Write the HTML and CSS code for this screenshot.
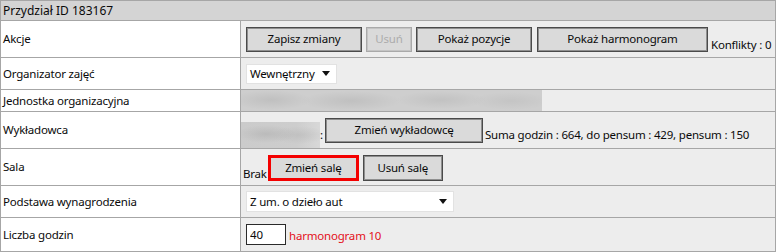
FILE: index.html
```html
<!DOCTYPE html>
<html lang="pl">
<head>
<meta charset="utf-8">
<title>Przydział ID 183167</title>
<link rel="stylesheet" href="styles.css">
</head>
<body>
<div class="panel">
  <div class="head">Przydział ID 183167</div>

  <div class="row r-akcje">
    <div class="label">Akcje</div>
    <div class="value bottom">
      <button class="btn w-save">Zapisz zmiany</button>
      <button class="btn w-del" disabled>Usuń</button>
      <button class="btn w-pos">Pokaż pozycje</button>
      <button class="btn w-harm">Pokaż harmonogram</button>
      <span class="note">Konflikty : 0</span>
    </div>
  </div>

  <div class="row r-org">
    <div class="label">Organizator zajęć</div>
    <div class="value">
      <div class="select w-org"><span>Wewnętrzny</span><svg class="arrow" width="8" height="5" viewBox="0 0 8 5"><path d="M0 0H8L4 5Z" fill="#111"/></svg></div>
    </div>
  </div>

  <div class="row r-unit">
    <div class="label">Jednostka organizacyjna</div>
    <div class="value flush">
      <div class="blur blur-unit"></div>
    </div>
  </div>

  <div class="row r-lect">
    <div class="label">Wykładowca</div>
    <div class="value flush lect">
      <div class="blur blur-name"></div>
      <span class="colon">:</span>
      <button class="btn w-lect">Zmień wykładowcę</button>
      <span class="note">Suma godzin : 664, do pensum : 429, pensum : 150</span>
    </div>
  </div>

  <div class="row r-room">
    <div class="label">Sala</div>
    <div class="value room">
      <span class="brak">Brak</span>
      <button class="btn btn-hl w-room">Zmień salę</button>
      <button class="btn w-droom">Usuń salę</button>
    </div>
  </div>

  <div class="row r-pay">
    <div class="label">Podstawa wynagrodzenia</div>
    <div class="value">
      <div class="select w-pay"><span>Z um. o dzieło aut</span><svg class="arrow" width="8" height="5" viewBox="0 0 8 5"><path d="M0 0H8L4 5Z" fill="#111"/></svg></div>
    </div>
  </div>

  <div class="row r-hours">
    <div class="label">Liczba godzin</div>
    <div class="value">
      <input class="num" type="text" value="40">
      <span class="red">harmonogram 10</span>
    </div>
  </div>
</div>
</body>
</html>
```

FILE: styles.css
```css
* { box-sizing: border-box; }
html, body { margin: 0; padding: 0; background: #fff; }
body {
  font-family: "Noto Sans", "Open Sans", sans-serif;
  font-size: 11.5px;
  letter-spacing: -0.2px;
  color: #0a0a0a;
}
.panel {
  width: 776px;
  border: 1px solid #a6a6a6;
}
.head {
  height: 19px;
  line-height: 19px;
  padding-left: 2px;
  background: #d4d4d4;
  font-size: 12px;
  letter-spacing: 0;
}
.row {
  display: grid;
  grid-template-columns: 240px 1fr;
  border-top: 1px solid #a6a6a6;
}
.r-akcje, .r-lect, .r-room { height: 37px; }
.r-org, .r-pay { height: 32px; }
.r-unit { height: 22px; }
.r-hours { height: 34px; }

.label {
  background: #fff;
  border-right: 1px solid #a6a6a6;
  padding-left: 2px;
  display: flex;
  align-items: center;
  padding-bottom: 1px;
}
.value {
  background: #ededed;
  padding-left: 5px;
  display: flex;
  align-items: center;
  white-space: nowrap;
}
.value.bottom { align-items: flex-end; padding-bottom: 5px; }
.value.flush { padding-left: 0; }

.btn {
  font: inherit;
  letter-spacing: inherit;
  color: #0a0a0a;
  height: 25px;
  padding: 0 0 2px;
  margin: 0 4px 0 0;
  background: #dadada;
  border: 1px solid #4a4a4a;
  box-shadow: inset 0 0 0 1px #8f8f8f;
  border-radius: 0;
  white-space: nowrap;
}
.btn:disabled {
  color: #acacac;
  border-color: #a9a9a9;
  box-shadow: inset 0 0 0 1px #c4c4c4;
}
.btn-hl {
  border: 3px solid #f40000;
  box-shadow: none;
}
.w-save { width: 116px; }
.w-del { width: 46px; }
.w-pos { width: 116px; margin-right: 5px; }
.w-harm { width: 171px; margin-right: 3px; }
.w-lect { width: 158px; margin-right: 2px; }
.w-room { width: 91px; height: 26px; }
.w-droom { width: 80px; height: 26px; }

.note { line-height: 14px; }

.select {
  height: 20px;
  background: #fff;
  border: 1px solid #e2e2e2;
  display: flex;
  align-items: center;
  justify-content: space-between;
  padding: 0 6px 0 3px;
}
.w-org { width: 91px; }
.w-pay { width: 208px; height: 21px; }
.select span { padding-bottom: 1px; }
.arrow { display: block; }

.blur-unit {
  width: 301px;
  height: 21px;
  background:
    radial-gradient(ellipse 40px 10px at 30px 10px, rgba(180,180,180,0.55), transparent),
    radial-gradient(ellipse 50px 10px at 110px 11px, rgba(178,178,178,0.5), transparent),
    radial-gradient(ellipse 45px 9px at 200px 10px, rgba(182,182,182,0.5), transparent),
    radial-gradient(ellipse 40px 9px at 270px 11px, rgba(185,185,185,0.45), transparent),
    #cecece;
}
.lect { align-items: flex-end; }
.lect .blur-name {
  width: 79px;
  height: 26px;
  background:
    radial-gradient(ellipse 30px 9px at 25px 12px, rgba(175,175,175,0.6), transparent),
    radial-gradient(ellipse 28px 9px at 58px 13px, rgba(180,180,180,0.5), transparent),
    linear-gradient(90deg, #cbcbcb, #cdcdcd 70%, #d8d8d8);
}
.lect .colon { width: 5px; padding-bottom: 6px; line-height: 14px; }
.lect .btn { margin-bottom: 5px; }
.lect .note { padding-bottom: 6px; }

.room { padding-left: 2px; align-items: flex-end; padding-bottom: 4px; }
.brak { line-height: 14px; margin-right: 1px; }
.room .btn { margin-right: 4px; }

.num {
  font: inherit;
  letter-spacing: inherit;
  width: 40px;
  height: 21px;
  border: 1px solid #2a2a2a;
  padding: 0 3px 1px;
  margin: 0 3px 0 0;
  background: #fff;
  color: #0a0a0a;
}
.red { color: #e4101b; padding-top: 2px; }
```
